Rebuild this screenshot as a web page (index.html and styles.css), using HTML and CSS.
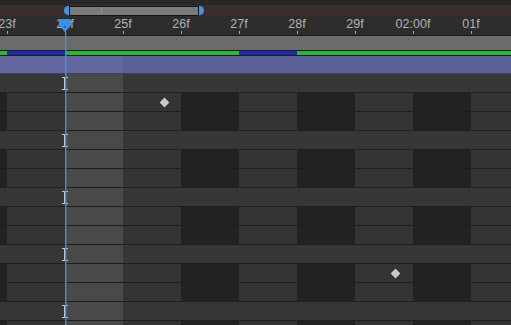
FILE: index.html
```html
<!DOCTYPE html>
<html lang="en">
<head>
    <meta charset="UTF-8">
    <meta name="viewport" content="width=device-width, initial-scale=1.0">
    <title>Timeline</title>
    <link rel="stylesheet" href="styles.css">
</head>
<body>

<div class="timeline">
    <!-- Top strip -->
    <div class="top-strip"></div>

    <!-- Navigator -->
    <div class="nav-band">
        <span class="nav-cap cap-left"></span>
        <span class="nav-thumb"><i class="nav-tick"></i></span>
        <span class="nav-cap cap-right"></span>
    </div>

    <!-- Ruler -->
    <div class="ruler">
        <div class="mark"><span>23f</span><i></i></div>
        <div class="mark"><span>24f</span><i></i></div>
        <div class="mark"><span>25f</span><i></i></div>
        <div class="mark"><span>26f</span><i></i></div>
        <div class="mark"><span>27f</span><i></i></div>
        <div class="mark"><span>28f</span><i></i></div>
        <div class="mark"><span>29f</span><i></i></div>
        <div class="mark major"><span>02:00f</span><i></i></div>
        <div class="mark"><span>01f</span><i></i></div>
    </div>

    <!-- Work area -->
    <div class="grey-band"></div>
    <div class="work-bar">
        <span class="seg green" style="width:7px"></span>
        <span class="seg blue" style="width:58px"></span>
        <span class="seg green" style="width:174px"></span>
        <span class="seg blue" style="width:58px"></span>
        <span class="seg green fill"></span>
    </div>
    <div class="layer-band"><div class="lit"></div></div>

    <!-- Tracks -->
    <div class="tracks">
        <div class="row layer"><i></i><i></i><i><svg class="ibeam" width="6" height="13" viewBox="0 0 6 13"><path d="M0 0.5H6M0 12.5H6" stroke="#b6c7da" stroke-width="1" fill="none"/><rect x="2" y="1" width="2" height="11" fill="#b6c7da"/></svg></i><i></i><i></i><i></i><i></i><i></i><i></i><i></i></div>
        <div class="row prop"><i></i><i></i><i></i><i class="key-cell" style="padding-left:37px"><b class="key"></b></i><i></i><i></i><i></i><i></i><i></i><i></i></div>
        <div class="row prop"><i></i><i></i><i></i><i></i><i></i><i></i><i></i><i></i><i></i><i></i></div>

        <div class="row layer"><i></i><i></i><i><svg class="ibeam" width="6" height="13" viewBox="0 0 6 13"><path d="M0 0.5H6M0 12.5H6" stroke="#b6c7da" stroke-width="1" fill="none"/><rect x="2" y="1" width="2" height="11" fill="#b6c7da"/></svg></i><i></i><i></i><i></i><i></i><i></i><i></i><i></i></div>
        <div class="row prop"><i></i><i></i><i></i><i></i><i></i><i></i><i></i><i></i><i></i><i></i></div>
        <div class="row prop"><i></i><i></i><i></i><i></i><i></i><i></i><i></i><i></i><i></i><i></i></div>

        <div class="row layer"><i></i><i></i><i><svg class="ibeam" width="6" height="13" viewBox="0 0 6 13"><path d="M0 0.5H6M0 12.5H6" stroke="#b6c7da" stroke-width="1" fill="none"/><rect x="2" y="1" width="2" height="11" fill="#b6c7da"/></svg></i><i></i><i></i><i></i><i></i><i></i><i></i><i></i></div>
        <div class="row prop"><i></i><i></i><i></i><i></i><i></i><i></i><i></i><i></i><i></i><i></i></div>
        <div class="row prop"><i></i><i></i><i></i><i></i><i></i><i></i><i></i><i></i><i></i><i></i></div>

        <div class="row layer"><i></i><i></i><i><svg class="ibeam" width="6" height="13" viewBox="0 0 6 13"><path d="M0 0.5H6M0 12.5H6" stroke="#b6c7da" stroke-width="1" fill="none"/><rect x="2" y="1" width="2" height="11" fill="#b6c7da"/></svg></i><i></i><i></i><i></i><i></i><i></i><i></i><i></i></div>
        <div class="row prop"><i></i><i></i><i></i><i></i><i></i><i></i><i></i><i class="key-cell" style="padding-left:36px"><b class="key"></b></i><i></i><i></i></div>
        <div class="row prop"><i></i><i></i><i></i><i></i><i></i><i></i><i></i><i></i><i></i><i></i></div>

        <div class="row layer"><i></i><i></i><i><svg class="ibeam" width="6" height="13" viewBox="0 0 6 13"><path d="M0 0.5H6M0 12.5H6" stroke="#b6c7da" stroke-width="1" fill="none"/><rect x="2" y="1" width="2" height="11" fill="#b6c7da"/></svg></i><i></i><i></i><i></i><i></i><i></i><i></i><i></i></div>
        <div class="row prop"><i></i><i></i><i></i><i></i><i></i><i></i><i></i><i></i><i></i><i></i></div>
    </div>

    <!-- Playhead (over everything) -->
    <div class="playhead">
        <svg class="playhead-head" width="12" height="13" viewBox="0 0 12 13">
            <path d="M1.5 0H10.5Q12 0 12 1.5V6.5L6 13L0 6.5V1.5Q0 0 1.5 0Z" fill="#3d8fe8"/>
            <rect x="5.5" y="7" width="1" height="2" fill="#16324f"/>
        </svg>
        <div class="playhead-line"></div>
    </div>
</div>

</body>
</html>
```

FILE: styles.css
```css
/* Page */
body {
    margin: 0;
    background-color: #363636;
    font-family: "Liberation Sans", Arial, sans-serif;
}

.timeline {
    width: 511px;
    height: 325px;
    position: relative;
    overflow: hidden;
    background-color: #363636;
}

/* Top strip */
.top-strip {
    height: 5px;
    background-color: #282828;
}

/* Navigator */
.nav-band {
    height: 11px;
    display: flex;
    align-items: center;
    padding-left: 64px;
    background-color: #3d2c2c;
}

.nav-cap {
    width: 5px;
    height: 9px;
    background-color: #3f94ec;
}

.cap-left {
    border-radius: 5px 0 0 5px;
}

.cap-right {
    border-radius: 0 5px 5px 0;
}

.nav-thumb {
    width: 130px;
    height: 10px;
    box-sizing: border-box;
    border: 1px solid #141414;
    background-color: #7a7a7a;
    display: flex;
    align-items: center;
}

.nav-tick {
    width: 1px;
    height: 7px;
    margin-left: 31px;
    background-color: #5c9ee2;
}

/* Ruler */
.ruler {
    height: 19px;
    display: flex;
    margin-left: -22px;
    border-bottom: 1px solid #1a1a1a;
    background-color: #2d2d2d;
}

.mark {
    width: 58px;
    flex-shrink: 0;
    display: flex;
    flex-direction: column;
    align-items: center;
}

.mark span {
    font-size: 12.5px;
    line-height: 14px;
    padding-top: 1px;
    color: #b3b3b3;
    white-space: nowrap;
}

.mark i {
    align-self: flex-start;
    width: 1px;
    height: 3px;
    margin: auto 0 1px 29px;
    background-color: #a9a9a9;
}

.mark.major i {
    height: 6px;
}

/* Work area */
.grey-band {
    height: 14px;
    background-color: #6b6b6b;
    border-bottom: 1px solid #1c1c1c;
}

.work-bar {
    height: 4px;
    display: flex;
    border-bottom: 1px solid #1c1c1c;
}

.seg {
    height: 100%;
}

.seg.green {
    background-color: #2db536;
}

.seg.blue {
    background-color: #1b2aa6;
}

.seg.fill {
    flex: 1;
}

.layer-band {
    height: 17px;
    background-color: #5a5f96;
    border-bottom: 1px solid #3c406a;
}

.layer-band .lit {
    width: 123px;
    height: 100%;
    background-color: #6267a0;
}

/* Tracks */
.row {
    height: 18px;
    display: grid;
    grid-template-columns: 7px repeat(8, 58px) 1fr;
    border-bottom: 1px solid #1f1f1f;
}

.row i {
    display: flex;
    align-items: center;
    box-sizing: border-box;
}

.row.layer i {
    background-color: #373737;
}

.row.prop i {
    background-color: #343434;
}

.row.prop i:nth-child(1),
.row.prop i:nth-child(5),
.row.prop i:nth-child(7),
.row.prop i:nth-child(9) {
    background-color: #222222;
}

.row i:nth-child(3) {
    background-color: #494949 !important;
}

.ibeam {
    margin-left: -3px;
}

/* Keyframe */
.key {
    width: 7px;
    height: 7px;
    margin-left: 1px;
    background-color: #c9c9c9;
    transform: rotate(45deg);
    box-shadow: 0 0 1px #1a1a1a;
}

/* Playhead */
.playhead {
    position: absolute;
    left: 59px;
    top: 19px;
    bottom: 0;
    width: 12px;
    display: flex;
    flex-direction: column;
    align-items: flex-start;
}

.playhead-line {
    width: 1px;
    flex: 1;
    margin-left: 6px;
    background-color: #3d8fe8;
    box-shadow: 1px 0 0 rgba(61, 143, 232, 0.35);
}
```
